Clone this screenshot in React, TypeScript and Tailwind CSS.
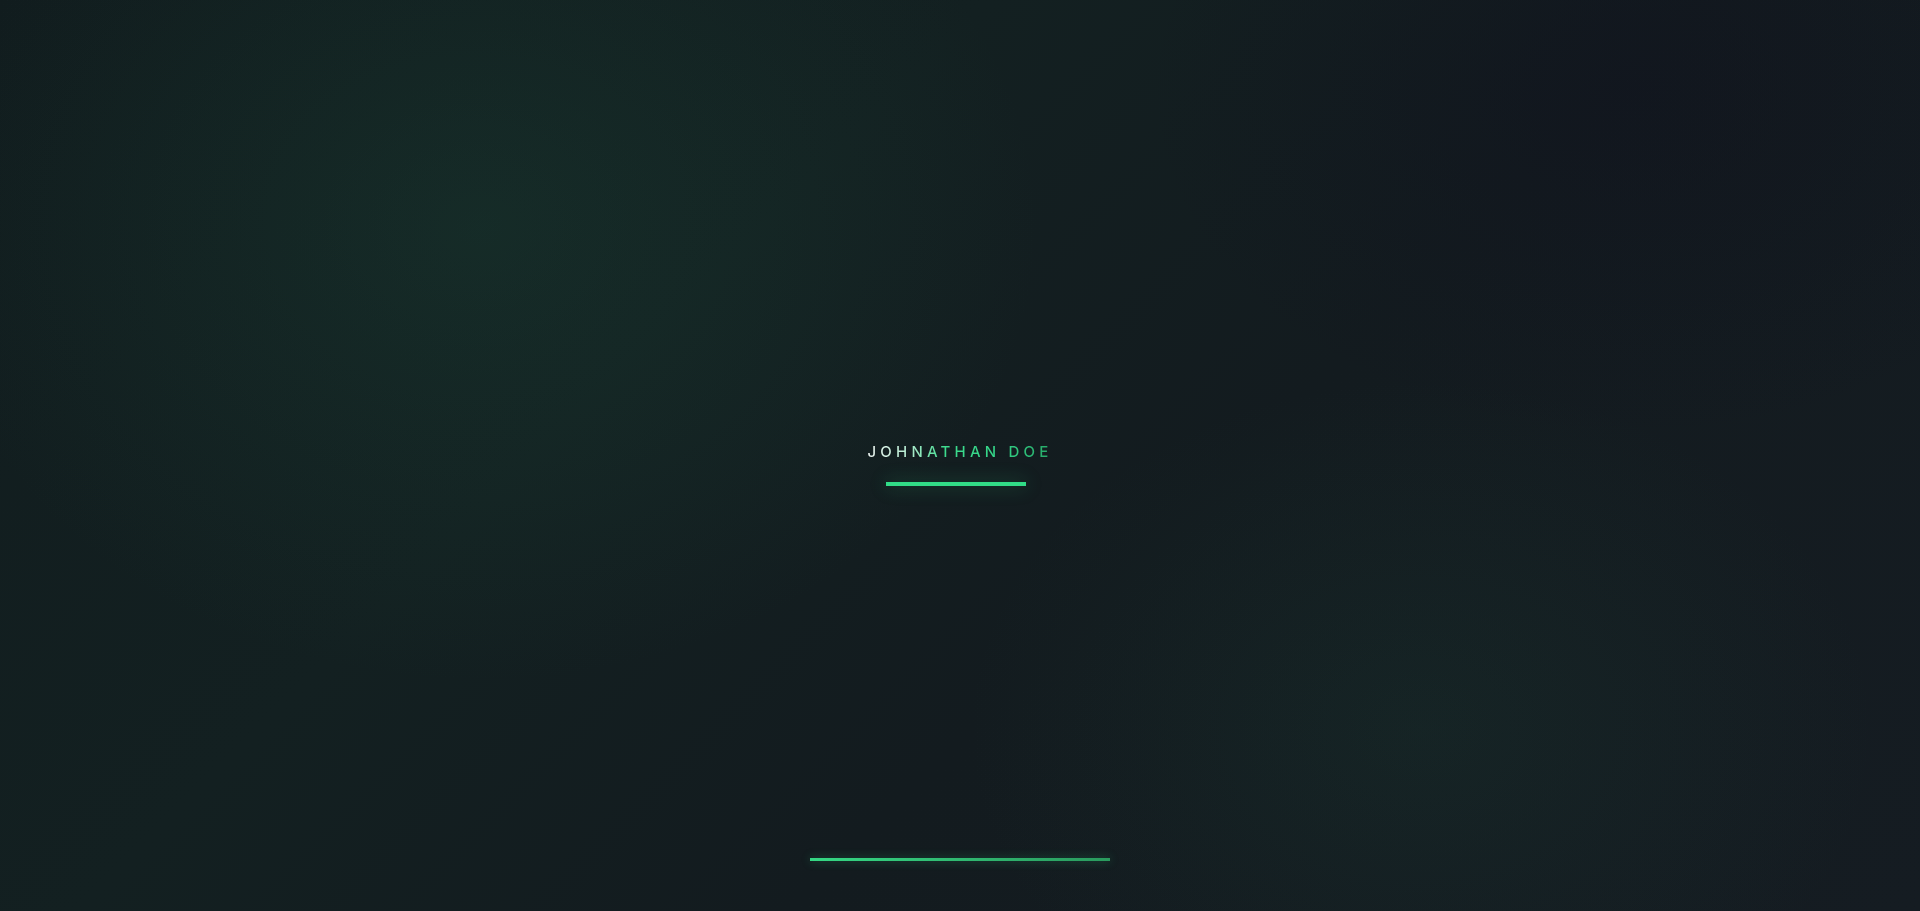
export default function App() {
  return (
    <div className="relative h-screen w-full overflow-hidden bg-[linear-gradient(135deg,#111c1e_0%,#132021_35%,#131b1f_60%,#151c22_100%)] font-['Inter','Liberation_Sans',sans-serif]">
      {/* Background glows */}
      <div className="pointer-events-none absolute inset-0 bg-[radial-gradient(ellipse_800px_650px_at_25%_25%,rgba(34,94,70,0.2),transparent_70%)]" />
      <div className="pointer-events-none absolute inset-0 bg-[radial-gradient(ellipse_650px_500px_at_74%_80%,rgba(34,94,70,0.13),transparent_70%)]" />
      <div className="pointer-events-none absolute inset-0 bg-[radial-gradient(ellipse_700px_500px_at_85%_10%,rgba(16,18,30,0.5),transparent_70%)]" />

      <div className="relative flex h-full flex-col items-center">
        {/* Loader */}
        <div className="flex flex-1 flex-col items-center justify-center pt-[68px]">
          <h1 className="bg-[linear-gradient(90deg,#eef5f2_0%,#b4ecd1_22%,#3ddc8e_42%,#34d488_70%,#27a868_100%)] bg-clip-text text-[15px] leading-[22px] font-medium tracking-[0.28em] text-transparent">
            JOHNATHAN DOE
          </h1>
          <div className="mt-[19px] mr-2 h-[4px] w-[140px] bg-[#31dc87] shadow-[0_0_18px_rgba(49,220,135,0.35)]" />
        </div>

        {/* Progress */}
        <div className="mb-[50px] h-[3px] w-[300px] bg-gradient-to-r from-[#35d884] to-[#2a9b5e] shadow-[0_0_10px_rgba(49,220,135,0.35)]" />
      </div>
    </div>
  );
}
